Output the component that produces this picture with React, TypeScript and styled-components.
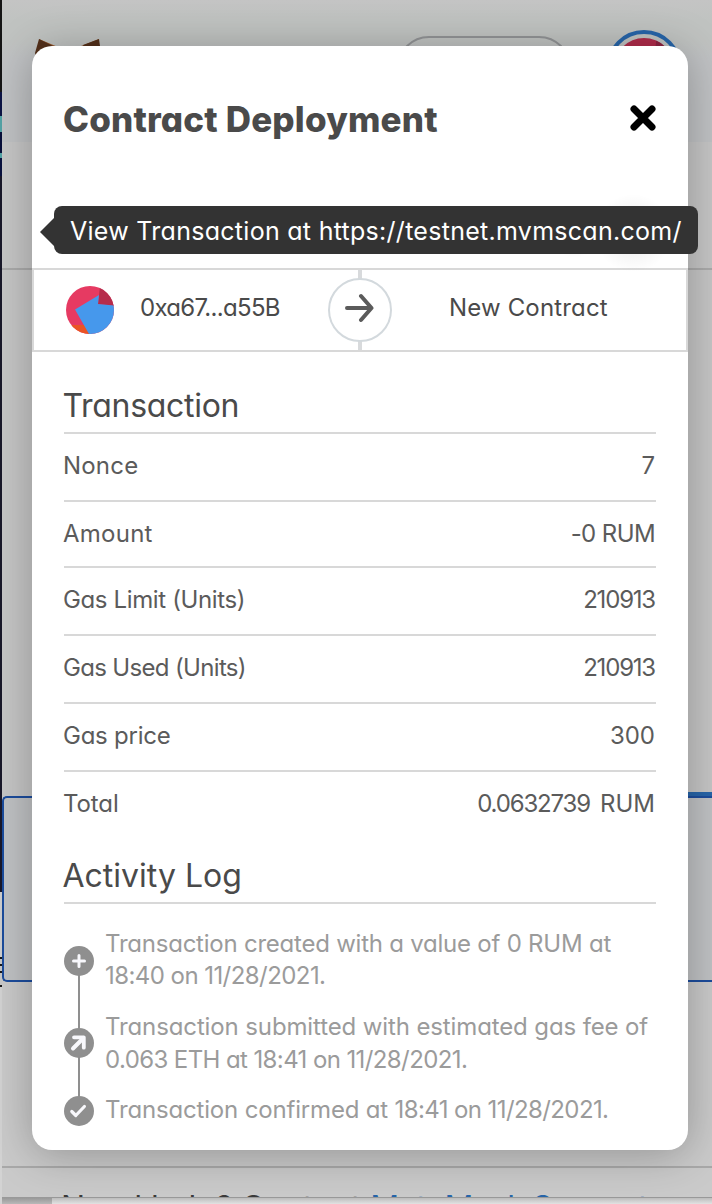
import React from "react";
import styled, { createGlobalStyle } from "styled-components";

const Global = createGlobalStyle`
  * { box-sizing: border-box; }
  body {
    margin: 0;
    overflow: hidden;
    color: #4a4a4a;
    background: #c8c8c8;
    font-family: Inter, "Liberation Sans", sans-serif;
    font-feature-settings: "cv11";
  }
`;

const Page = styled.div`
  position: relative;
  display: flex;
  width: 712px;
  height: 1204px;
  overflow: hidden;
`;

const DesktopEdge = styled.div`
  width: 2px;
  background: linear-gradient(
    #151515 0 92px, #0c1445 92px 116px, #54a3a6 116px 132px, #080f3a 132px 153px,
    #54a3a6 153px 158px, #0a123f 158px 176px, #191829 176px 892px,
    #cfcfcf 892px 957px, #1a1a1a 957px 959px, #c8c8c8 959px 964px,
    #1a1a1a 964px 966px, #c8c8c8 966px 971px, #1a1a1a 971px 973px,
    #c8c8c8 973px 985px, #1a1a1a 985px 987px, #d3d3d3 987px
  );
`;

const Wallet = styled.div`
  flex: 1;
  display: flex;
  flex-direction: column;
`;

const Header = styled.header`
  display: flex;
  align-items: flex-start;
  height: 142px;
  padding: 30px 30px 0 33px;
  background: linear-gradient(#c4c4c4, #c0c3c1 20px, #c0c3c1 40px, #c0c2c4 60px);
`;

const Fox = styled.svg`
  width: 66px;
  height: 60px;
  margin-top: 9px;
`;

const NetworkPill = styled.div`
  width: 174px;
  height: 64px;
  margin: 6px 35px 0 auto;
  border: 2px solid #929496;
  border-radius: 32px;
`;

const AccountRing = styled.div`
  display: flex;
  align-items: center;
  justify-content: center;
  width: 76px;
  height: 76px;
  border: 4px solid #2765a9;
  border-radius: 50%;
`;

const TabArea = styled.div`
  height: 128px;
  background: #c6c6c6;
  border-bottom: 2px solid #ababab;
`;

const AssetArea = styled.div`
  height: 526px;
  background: #c6c6c6;
`;

const FocusedPanel = styled.div`
  height: 186px;
  background: #c0c2c4;
  border: 2px solid #1c4c9c;
  border-right: 0;
  border-radius: 5px 0 0 5px;
`;

const SupportArea = styled.div`
  height: 186px;
  background: #cacaca;
  border-bottom: 2px solid #a9a9a9;
`;

const SupportLine = styled.div`
  height: 30px;
  padding: 22px 0 0 59px;
  overflow: hidden;
  font-size: 32px;
  line-height: 36px;
  white-space: nowrap;
  color: #3b3b3b;
  background: #cacaca;
  border-bottom: 1px solid #999;
`;

const SupportLink = styled.span`
  letter-spacing: -0.8px;
  color: #2765a9;
`;

const BottomEdge = styled.div`
  flex: 1;
  display: flex;
  background: linear-gradient(#bdbdbd, #e2e2e2);

  &::before {
    content: "";
    width: 50px;
    background: linear-gradient(#999, #b8b8b8);
  }
`;

const TabMarker = styled.div`
  position: absolute;
  top: 792px;
  right: 0;
  width: 26px;
  height: 4px;
  background: #2765a9;
`;

const Modal = styled.section`
  position: absolute;
  top: 46px;
  left: 32px;
  display: flex;
  flex-direction: column;
  width: 656px;
  height: 1104px;
  background: #fff;
  border-radius: 20px;
  box-shadow: 0 4px 44px rgba(0, 0, 0, 0.28);
`;

const ModalHeader = styled.div`
  display: flex;
  align-items: center;
  justify-content: space-between;
  height: 222px;
  padding: 0 32px 76px 31px;
`;

const Title = styled.h1`
  margin: 0;
  font-size: 35px;
  font-weight: 800;
  letter-spacing: 0.17px;
`;

const CloseIcon = styled.svg`
  width: 26px;
  height: 26px;
  margin-top: -2px;
`;

const Parties = styled.div`
  display: flex;
  height: 84px;
  border: 2px solid #d8d8d8;
`;

const Sender = styled.div`
  display: flex;
  align-items: center;
  gap: 26px;
  width: 294px;
  padding-left: 32px;
`;

const PartyName = styled.span<{ $ls: number }>`
  margin-top: -6px;
  font-size: 24px;
  letter-spacing: ${(p) => p.$ls}px;
`;

const Recipient = styled.div`
  display: flex;
  flex: 1;
  align-items: center;
  padding-left: 57px;
`;

const Divider = styled.div`
  display: flex;
  align-items: center;
  width: 64px;
  background: linear-gradient(#d8dadc, #d8dadc) center / 4px 100% no-repeat;
`;

const ArrowCircle = styled.div`
  display: flex;
  align-items: center;
  justify-content: center;
  width: 64px;
  height: 64px;
  padding: 0 3px 4px 0;
  background: #fff;
  border: 2px solid #d3d9dd;
  border-radius: 50%;
`;

const Details = styled.div`
  padding: 0 32px;
`;

const SectionTitle = styled.h2<{ $height: number; $ls?: number }>`
  display: flex;
  align-items: flex-end;
  height: ${(p) => p.$height}px;
  margin: 0;
  padding-bottom: 7px;
  font-size: 32px;
  font-weight: 400;
  line-height: 38px;
  letter-spacing: ${(p) => p.$ls ?? 0}px;
  text-indent: -1.5px;
  border-bottom: 2px solid #d8d8d8;
`;

const DetailRow = styled.div<{ $height: number; $last?: boolean }>`
  display: flex;
  align-items: flex-start;
  justify-content: space-between;
  height: ${(p) => p.$height}px;
  padding-top: 17px;
  font-size: 24px;
  line-height: 30px;
  color: #5b5b5b;
  border-bottom: ${(p) => (p.$last ? 0 : 2)}px solid #d8d8d8;
`;

const Value = styled.span<{ $ls: number }>`
  display: flex;
  gap: 10px;
  margin-right: 1px;
  letter-spacing: ${(p) => p.$ls}px;
`;

const Label = styled.span<{ $ls: number }>`
  margin-left: -1px;
  letter-spacing: ${(p) => p.$ls}px;
`;

const Unit = styled.span`
  letter-spacing: 0;
`;

const Log = styled.div`
  display: flex;
  flex-direction: column;
  padding-top: 24px;
`;

const LogEntry = styled.div<{ $height: number; $iconTop: number }>`
  display: grid;
  grid-template-columns: 30px 1fr;
  column-gap: 11px;
  height: ${(p) => p.$height}px;

  > svg {
    margin-top: ${(p) => p.$iconTop}px;
  }
`;

const LogIcon = styled.svg`
  display: block;
  width: 30px;
  overflow: visible;
`;

const LogText = styled.div<{ $leading: number }>`
  font-size: 24px;
  line-height: ${(p) => p.$leading}px;
  white-space: nowrap;
  color: #9b9b9b;
`;

const LogLine = styled.div<{ $ls?: number }>`
  letter-spacing: ${(p) => p.$ls ?? 0}px;
`;

const Num = styled.span`
  letter-spacing: -0.6px;
`;

const Tooltip = styled.div`
  position: absolute;
  top: 206px;
  left: 54px;
  width: 644px;
  height: 48px;
  padding-left: 16px;
  font-size: 25px;
  line-height: 50px;
  letter-spacing: 0.28px;
  white-space: nowrap;
  color: #fff;
  background: #333;
  border-radius: 8px;

  &::before {
    content: "";
    position: absolute;
    top: 12px;
    left: -14px;
    border: solid transparent;
    border-width: 14px 14px 14px 0;
    border-right-color: #333;
  }
`;

const Glow = styled.div<{ $left: number; $size: number }>`
  position: absolute;
  top: ${(p) => 233 - p.$size / 2}px;
  left: ${(p) => p.$left}px;
  width: ${(p) => p.$size}px;
  height: ${(p) => p.$size}px;
  background: radial-gradient(closest-side, rgba(0, 0, 0, 0.09), transparent);
`;

const Identicon = ({ size, dim }: { size: number; dim?: boolean }) => (
  <svg width={size} height={size} viewBox="0 0 48 48">
    <defs>
      <clipPath id={dim ? "cd" : "cl"}><circle cx="24" cy="24" r="24" /></clipPath>
    </defs>
    <g clipPath={`url(#${dim ? "cd" : "cl"})`}>
      <path fill={dim ? "#b02c4b" : "#e63a62"} d="M0 0h48v48H0z" />
      <path fill={dim ? "#8c2340" : "#b62c4c"} d="M34 0h14v20l-16-2z" />
      <path fill="#ea5425" d="M0 39h20l6 9H0z" />
      <path fill="#4698ec" d="M9 23.500L33 9l-1 9 16 1.500V48H23z" />
    </g>
  </svg>
);

type LogKind = "add" | "send" | "done";

const marks: Record<LogKind, React.ReactNode> = {
  add: <path d="M15 9.500v11M9.500 15h11" strokeWidth="3" />,
  send: (
    <>
      <path d="M9 20.500l9-9" strokeWidth="4" />
      <path d="M10 9.300h9.800v10.400" strokeWidth="3.800" />
    </>
  ),
  done: <path d="M7.800 15.500l4 4 8.600-9" strokeWidth="3.200" />,
};

const Mark = ({ kind, line }: { kind: LogKind; line: number }) => (
  <LogIcon viewBox="0 0 30 30" height="30">
    {line > 0 && <path d={`M15 28v${line}`} stroke="#8f8f8f" strokeWidth="2" />}
    <circle cx="15" cy="15" r="15" fill="#8f8f8f" />
    <g stroke="#f8f8fc" fill="none" strokeLinecap="round" strokeLinejoin="round">
      {marks[kind]}
    </g>
  </LogIcon>
);

const rows = [
  { label: "Nonce", ls: 0.2, value: "7", vls: 0, height: 68 },
  { label: "Amount", ls: 0.25, value: "-0 RUM", vls: -0.6, height: 66 },
  { label: "Gas Limit (Units)", ls: -0.37, value: "210913", vls: -1.2, height: 68 },
  { label: "Gas Used (Units)", ls: -0.67, value: "210913", vls: -1.2, height: 68 },
  { label: "Gas price", ls: -0.25, value: "300", vls: 0, height: 68 },
  { label: "Total", ls: -0.1, value: "0.0632739", unit: "RUM", vls: -1.15, height: 68 },
];

export default function App() {
  return (
    <Page>
      <Global />
      <DesktopEdge />
      <Wallet>
        <Header>
          <Fox viewBox="0 0 66 60">
            <path fill="#98582b" d="M4 0L30 11H36L64 0l-4 30H6z" />
            <path fill="#54301a" d="M4 0L0 14l5 16 15-22zM64 0l2 14-5 16L48 6z" />
          </Fox>
          <NetworkPill />
          <AccountRing><Identicon size={60} dim /></AccountRing>
        </Header>
        <TabArea />
        <AssetArea />
        <FocusedPanel />
        <SupportArea />
        <SupportLine>
          Need help? Contact <SupportLink>MetaMask Support</SupportLink>
        </SupportLine>
        <BottomEdge />
      </Wallet>
      <TabMarker />

      <Modal>
        <ModalHeader>
          <Title>Contract Deployment</Title>
          <CloseIcon viewBox="0 0 26 26">
            <path d="M4 4l18 18M22 4L4 22" stroke="#000" strokeWidth="7" strokeLinecap="round" />
          </CloseIcon>
        </ModalHeader>
        <Parties>
          <Sender>
            <Identicon size={48} />
            <PartyName $ls={-0.7}>0xa67...a55B</PartyName>
          </Sender>
          <Divider>
            <ArrowCircle>
              <svg width="30" height="30" viewBox="0 0 30 30" fill="none" stroke="#5b5b5b" strokeWidth="4" strokeLinecap="round" strokeLinejoin="round">
                <path d="M3 15h24M17 3l10.500 12L17 27" />
              </svg>
            </ArrowCircle>
          </Divider>
          <Recipient><PartyName $ls={0.16}>New Contract</PartyName></Recipient>
        </Parties>

        <Details>
          <SectionTitle $height={82} $ls={-0.3}>Transaction</SectionTitle>
          {rows.map((r) => (
            <DetailRow key={r.label} $height={r.height} $last={r.label === "Total"}>
              <Label $ls={r.ls}>{r.label}</Label>
              <Value $ls={r.vls}>{r.value}{r.unit && <Unit>{r.unit}</Unit>}</Value>
            </DetailRow>
          ))}
          <SectionTitle $height={64}>Activity Log</SectionTitle>
          <Log>
            <LogEntry $height={82} $iconTop={18}>
              <Mark kind="add" line={56} />
              <LogText $leading={32}>
                <LogLine $ls={-0.23}>Transaction created with a value of 0 RUM at</LogLine>
                <LogLine $ls={-0.56}>18:40 on 11/28/2021.</LogLine>
              </LogText>
            </LogEntry>
            <LogEntry $height={84} $iconTop={18}>
              <Mark kind="send" line={42} />
              <LogText $leading={33}>
                <LogLine $ls={-0.12}>Transaction submitted with estimated gas fee of</LogLine>
                <LogLine $ls={-0.6}>0.063 ETH at 18:41 on 11/28/2021.</LogLine>
              </LogText>
            </LogEntry>
            <LogEntry $height={32} $iconTop={2}>
              <Mark kind="done" line={0} />
              <LogText $leading={32}>
                <LogLine $ls={-0.17}>Transaction confirmed at <Num>18:41 on 11/28/2021.</Num></LogLine>
              </LogText>
            </LogEntry>
          </Log>
        </Details>
      </Modal>

      <Glow $left={550} $size={50} />
      <Glow $left={594} $size={78} />
      <Tooltip>View Transaction at https://testnet.mvmscan.com/</Tooltip>
    </Page>
  );
}
